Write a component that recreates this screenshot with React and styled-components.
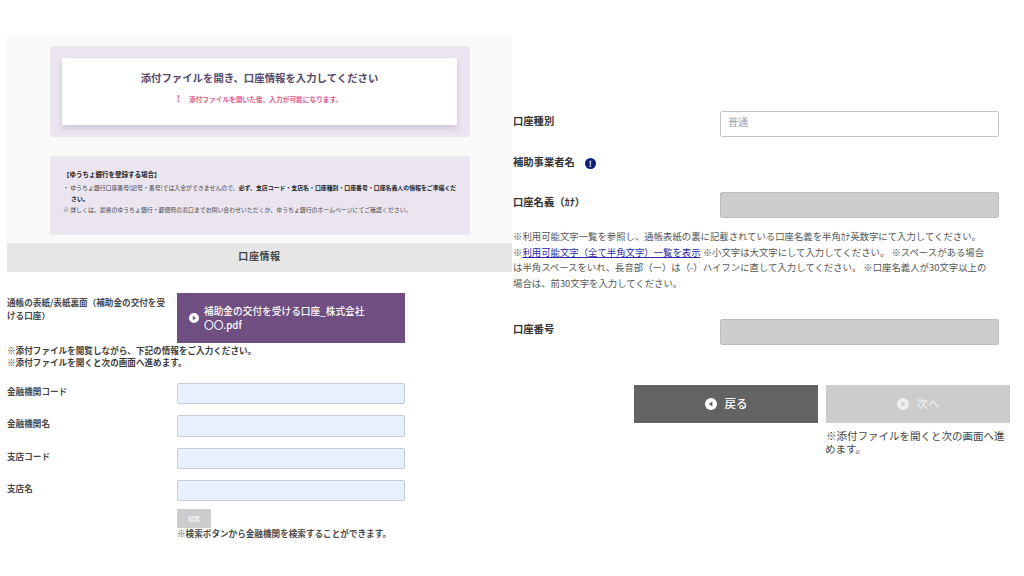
import React from "react";
import styled, { createGlobalStyle } from "styled-components";

const GlobalStyle = createGlobalStyle`
  html, body {
    margin: 0;
    padding: 0;
    background: #fff;
  }
  body {
    font-family: "Noto Sans CJK JP", "Noto Sans", sans-serif;
    color: #333;
  }
`;

const Page = styled.div`
  width: 1024px;
  height: 576px;
  display: flex;
  overflow: hidden;
`;

const LeftColumn = styled.div`
  width: 505px;
  margin-left: 7px;
  padding-top: 36px;
  display: flex;
  flex-direction: column;
`;

const RightColumn = styled.div`
  width: 511px;
  padding: 111px 0 0 1px;
  display: flex;
  flex-direction: column;
`;

const Hero = styled.div`
  background: #f9f9f9;
  height: 207px;
  padding: 10px 42px 0 43px;
  box-sizing: border-box;
  display: flex;
  flex-direction: column;
  gap: 19px;
`;

const LilacPanel = styled.div`
  background: #ebe5f0;
  border-radius: 4px;
  box-sizing: border-box;
  height: ${(p) => p.$h}px;
`;

const AttachPanel = styled(LilacPanel)`
  padding: 12px 13px 0 12px;
`;

const WhiteCard = styled.div`
  background: #fff;
  height: 67px;
  box-shadow: 0 3px 6px rgba(90, 70, 110, 0.2);
  display: flex;
  flex-direction: column;
  align-items: center;
`;

const CardTitle = styled.div`
  margin-top: 12px;
  font-size: 10.4px;
  line-height: 16px;
  font-weight: 700;
  color: #55496a;
`;

const CardWarn = styled.div`
  margin-top: 7px;
  font-size: 6.7px;
  line-height: 12px;
  font-weight: 700;
  color: #e0608a;
  display: flex;
  align-items: center;
  gap: 9px;
`;

const WarnMark = styled.span`
  font-size: 9px;
  font-weight: 700;
`;

const YuchoPanel = styled(LilacPanel)`
  padding: 12px 12px 0 13px;
  font-size: 5.9px;
  line-height: 11px;
  color: #444;
`;

const YuchoTitle = styled.div`
  font-size: 6.5px;
  font-weight: 700;
  color: #222;
  margin-bottom: 2px;
  line-height: 12px;
`;

const YuchoItem = styled.div`
  padding-left: 8px;
  text-indent: -8px;
  line-height: 11px;
  b {
    color: #222;
  }
`;

const SectionBar = styled.div`
  height: 29px;
  background: #e6e6e6;
  display: flex;
  align-items: center;
  justify-content: center;
  padding-bottom: 4px;
  box-sizing: border-box;
  font-size: 10px;
  font-weight: 700;
  letter-spacing: 0.6px;
  color: #444;
`;

const FormArea = styled.div`
  width: 398px;
  padding-top: 21px;
  display: flex;
  flex-direction: column;
`;

const FileRow = styled.div`
  display: flex;
`;

const FieldLabel = styled.div`
  width: 170px;
  flex: none;
  font-size: 8.6px;
  line-height: 13px;
  font-weight: 700;
  color: #4a4a4a;
  padding: 2px 4px 0 0;
  box-sizing: border-box;
`;

const FileLabel = styled(FieldLabel)`
  padding-top: 3px;
`;

const FileButton = styled.div`
  flex: 1;
  height: 50px;
  background: #6f4e82;
  color: #fff;
  font-size: 9.7px;
  font-weight: 500;
  line-height: 14px;
  display: flex;
  align-items: center;
  gap: 5px;
  padding-left: 12px;
  box-sizing: border-box;
`;

const Notes = styled.div`
  margin-top: 1px;
  font-size: 8.6px;
  line-height: 12px;
  font-weight: 700;
  color: #3c3c3c;
`;

const InputRows = styled.div`
  margin-top: 15px;
  display: flex;
  flex-direction: column;
  gap: 11px;
`;

const InputRow = styled.div`
  display: flex;
  height: 21.3px;
`;

const BlueInput = styled.div`
  flex: 1;
  background: #e8f0fe;
  border: 1px solid #c3cbdc;
  border-radius: 2px;
  box-sizing: border-box;
`;

const SearchBlock = styled.div`
  margin: 8px 0 0 170px;
`;

const SearchButton = styled.div`
  width: 34px;
  height: 19px;
  background: #cccccc;
  color: #fff;
  font-size: 6px;
  display: flex;
  align-items: center;
  justify-content: center;
`;

const SearchNote = styled.div`
  margin-top: -1px;
  font-size: 8.6px;
  line-height: 13px;
  font-weight: 700;
  white-space: nowrap;
  color: #4a4a4a;
`;

const RightRow = styled.div`
  display: flex;
  height: ${(p) => p.$h}px;
  margin-top: ${(p) => p.$mt || 0}px;
`;

const RightLabel = styled.div`
  width: 207px;
  flex: none;
  font-size: 10.3px;
  line-height: 20px;
  font-weight: 700;
  color: #333;
  display: flex;
  align-items: flex-start;
  gap: 10px;
`;

const InfoDot = styled.span`
  width: 11px;
  height: 11px;
  margin-top: 6px;
  border-radius: 50%;
  background: #0b1f80;
  color: #fff;
  font-size: 8px;
  line-height: 11px;
  font-weight: 700;
  text-align: center;
`;

const TextBox = styled.div`
  width: 279px;
  height: 26px;
  box-sizing: border-box;
  border-radius: 2px;
  border: 1px solid ${(p) => (p.$disabled ? "#bdbdbd" : "#c4c4c4")};
  background: ${(p) => (p.$disabled ? "#cdcdcd" : "#fff")};
  color: #a0a0a0;
  font-size: 10px;
  line-height: 19px;
  padding-left: 7px;
`;

const HelpText = styled.div`
  margin-top: 11px;
  width: 478px;
  font-size: 9.4px;
  line-height: 15.6px;
  color: #555;
  a {
    color: #2a2aa8;
    text-decoration: underline;
  }
`;

const ButtonRow = styled.div`
  margin: 40px 0 0 121px;
  display: flex;
  gap: 8px;
`;

const ButtonColumn = styled.div`
  width: 184px;
`;

const NavButton = styled.div`
  width: ${(p) => p.$w}px;
  height: 38px;
  background: ${(p) => (p.$dim ? "#cccccc" : "#636363")};
  color: ${(p) => (p.$dim ? "#eeeeee" : "#fff")};
  font-size: 11.5px;
  font-weight: 500;
  display: flex;
  align-items: center;
  justify-content: center;
  gap: 8px;
  padding-bottom: 3px;
  box-sizing: border-box;
`;

const ButtonIcon = styled.span`
  display: flex;
  margin-top: 3px;
`;

const ButtonNote = styled.div`
  margin: 6px 0 0 -1px;
  font-size: 10.5px;
  line-height: 13px;
  color: #444;
  text-indent: 1px;
`;

const CircleArrow = ({ dir = "right", size = 11, fill = "#fff", arrow = "#6f4e82" }) => (
  <svg width={size} height={size} viewBox="0 0 12 12">
    <circle cx="6" cy="6" r="6" fill={fill} />
    <path d={dir === "right" ? "M4.6 3.4 8.4 6 4.6 8.6Z" : "M7.4 3.4 3.6 6 7.4 8.6Z"} fill={arrow} />
  </svg>
);

const fields = ["金融機関コード", "金融機関名", "支店コード", "支店名"];

export default function App() {
  return (
    <>
      <GlobalStyle />
      <Page>
        <LeftColumn>
          <Hero>
            <AttachPanel $h={91}>
              <WhiteCard>
                <CardTitle>添付ファイルを開き、口座情報を入力してください</CardTitle>
                <CardWarn>
                  <WarnMark>!</WarnMark>
                  添付ファイルを開いた後、入力が可能になります。
                </CardWarn>
              </WhiteCard>
            </AttachPanel>
            <YuchoPanel $h={79}>
              <YuchoTitle>【ゆうちょ銀行を登録する場合】</YuchoTitle>
              <YuchoItem>
                ・ ゆうちょ銀行口座番号(記号・番号)では入金ができませんので、<b>必ず、支店コード・支店名・口座種別・口座番号・口座名義人の情報をご準備ください。</b>
              </YuchoItem>
              <YuchoItem>※ 詳しくは、最寄のゆうちょ銀行・郵便局の窓口までお問い合わせいただくか、ゆうちょ銀行のホームページにてご確認ください。</YuchoItem>
            </YuchoPanel>
          </Hero>
          <SectionBar>口座情報</SectionBar>
          <FormArea>
            <FileRow>
              <FileLabel>通帳の表紙/表紙裏面（補助金の交付を受ける口座）</FileLabel>
              <FileButton>
                <CircleArrow size={10} />
                <span>
                  補助金の交付を受ける口座_株式会社
                  <br />
                  〇〇.pdf
                </span>
              </FileButton>
            </FileRow>
            <Notes>
              ※添付ファイルを閲覧しながら、下記の情報をご入力ください。
              <br />
              ※添付ファイルを開くと次の画面へ進めます。
            </Notes>
            <InputRows>
              {fields.map((f) => (
                <InputRow key={f}>
                  <FieldLabel>{f}</FieldLabel>
                  <BlueInput />
                </InputRow>
              ))}
            </InputRows>
            <SearchBlock>
              <SearchButton>検索</SearchButton>
              <SearchNote>※検索ボタンから金融機関を検索することができます。</SearchNote>
            </SearchBlock>
          </FormArea>
        </LeftColumn>
        <RightColumn>
          <RightRow $h={26}>
            <RightLabel>口座種別</RightLabel>
            <TextBox>普通</TextBox>
          </RightRow>
          <RightRow $h={26} $mt={15}>
            <RightLabel>
              補助事業者名
              <InfoDot>!</InfoDot>
            </RightLabel>
          </RightRow>
          <RightRow $h={26} $mt={14}>
            <RightLabel>口座名義（ｶﾅ）</RightLabel>
            <TextBox $disabled />
          </RightRow>
          <HelpText>
            ※利用可能文字一覧を参照し、通帳表紙の裏に記載されている口座名義を半角ｶﾅ英数字にて入力してください。
            <br />
            ※<a href="#chars">利用可能文字（全て半角文字）一覧を表示</a> ※小文字は大文字にして入力してください。 ※スペースがある場合は半角スペースをいれ、長音部（ー）は（-）ハイフンに直して入力してください。 ※口座名義人が30文字以上の場合は、前30文字を入力してください。
          </HelpText>
          <RightRow $h={26} $mt={28}>
            <RightLabel>口座番号</RightLabel>
            <TextBox $disabled />
          </RightRow>
          <ButtonRow>
            <NavButton $w={184}>
              <ButtonIcon>
                <CircleArrow dir="left" size={12} arrow="#636363" />
              </ButtonIcon>
              戻る
            </NavButton>
            <ButtonColumn>
              <NavButton $w={184} $dim>
                <ButtonIcon>
                  <CircleArrow size={12} fill="#eeeeee" arrow="#cccccc" />
                </ButtonIcon>
                次へ
              </NavButton>
              <ButtonNote>※添付ファイルを開くと次の画面へ進めます。</ButtonNote>
            </ButtonColumn>
          </ButtonRow>
        </RightColumn>
      </Page>
    </>
  );
}
